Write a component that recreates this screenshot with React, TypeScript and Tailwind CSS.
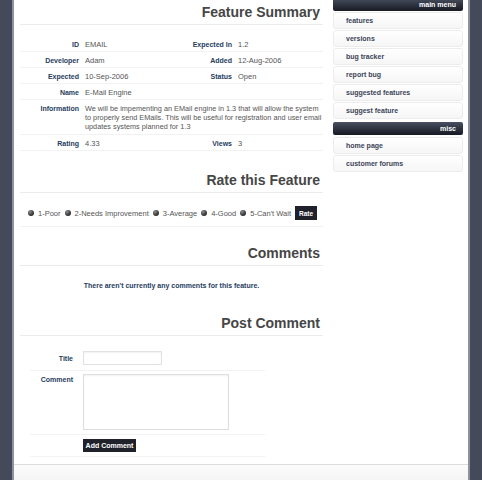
import React from "react";

const font = "font-['Liberation_Sans',Arial,Helvetica,sans-serif]";

function Heading({ children }: { children: React.ReactNode }) {
  return (
    <div className="border-b border-[#ececec] pb-[3px] pr-[3px] text-right text-[14px] font-bold leading-[18px] text-[#464646]">
      {children}
    </div>
  );
}

function Row({ children, tall }: { children: React.ReactNode; tall?: boolean }) {
  return (
    <div
      className={
        "grid grid-cols-[65px_100px_53px_1fr] border-b border-[#f2f2f2] " +
        (tall ? "pb-[3px] pt-[4px]" : "pb-[2.5px] pt-[3.5px]")
      }
    >
      {children}
    </div>
  );
}

function Label({ children }: { children: React.ReactNode }) {
  return <div className="pr-[6px] text-right text-[7px] font-bold text-[#1f3d5e]">{children}</div>;
}

function Value({ children }: { children: React.ReactNode }) {
  return <div className="text-[7.5px] text-[#555555]">{children}</div>;
}

function Radio({ label }: { label: string }) {
  return (
    <span className="flex items-center gap-[4px]">
      <span className="h-[6px] w-[6px] rounded-full bg-[radial-gradient(circle_at_35%_30%,#8a8a8a,#2a2a2a_70%)]" />
      <span className="text-[7.5px] text-[#555555]">{label}</span>
    </span>
  );
}

function MenuBar({ title }: { title: string }) {
  return (
    <div className="h-[13px] rounded-[2px] bg-gradient-to-b from-[#4b5162] to-[#171a23] pr-[7px] text-right text-[7px] font-bold leading-[13px] text-white">
      {title}
    </div>
  );
}

function MenuItem({ label }: { label: string }) {
  return (
    <div className="h-[17px] rounded-[3px] border border-[#ececec] bg-gradient-to-b from-white to-[#f6f6f6] pl-[12px] text-[7px] font-bold leading-[15px] text-[#3b4457]">
      {label}
    </div>
  );
}

export default function App() {
  const mainMenu = ["features", "versions", "bug tracker", "report bug", "suggested features", "suggest feature"];
  const misc = ["home page", "customer forums"];

  return (
    <div className={"h-[480px] w-[482px] overflow-hidden bg-[#444a5a] px-[12px] " + font}>
      <div className="flex h-full flex-col border-x-2 border-[#8d929e] bg-white">
        <div className="flex flex-1">
          {/* main column */}
          <div className="ml-[6px] w-[303px] pt-[3px] text-[7px] leading-[9px]">
            <Heading>Feature Summary</Heading>

            <div className="mt-[11px]">
              <Row>
                <Label>ID</Label>
                <Value>EMAIL</Value>
                <Label>Expected In</Label>
                <Value>1.2</Value>
              </Row>
              <Row>
                <Label>Developer</Label>
                <Value>Adam</Value>
                <Label>Added</Label>
                <Value>12-Aug-2006</Value>
              </Row>
              <Row>
                <Label>Expected</Label>
                <Value>10-Sep-2006</Value>
                <Label>Status</Label>
                <Value>Open</Value>
              </Row>
              <Row>
                <Label>Name</Label>
                <Value>E-Mail Engine</Value>
              </Row>
              <Row tall>
                <Label>Information</Label>
                <div className="col-span-3 whitespace-nowrap text-[7.3px] text-[#555555]">
                  We will be impementing an EMail engine in 1.3 that will allow the system
                  <br />
                  to properly send EMails. This will be useful for registration and user email
                  <br />
                  updates systems planned for 1.3
                </div>
              </Row>
              <Row>
                <Label>Rating</Label>
                <Value>4.33</Value>
                <Label>Views</Label>
                <Value>3</Value>
              </Row>
            </div>

            <div className="mt-[20px]">
              <Heading>Rate this Feature</Heading>
            </div>
            <div className="flex items-center gap-[4px] border-b border-[#f2f2f2] pb-[6px] pl-[8px] pt-[13px]">
              <Radio label="1-Poor" />
              <Radio label="2-Needs Improvement" />
              <Radio label="3-Average" />
              <Radio label="4-Good" />
              <Radio label="5-Can't Wait" />
              <button className="h-[14px] bg-[#1f222b] px-[4px] text-[6.5px] font-bold text-white">Rate</button>
            </div>

            <div className="mt-[17px]">
              <Heading>Comments</Heading>
            </div>
            <div className="pt-[15px] text-center font-bold text-[#1f3d5e]">
              There aren't currently any comments for this feature.
            </div>

            <div className="mt-[24px]">
              <Heading>Post Comment</Heading>
            </div>
            <div className="ml-[10px] w-[235px] pt-[15px]">
              <div className="flex items-center border-b border-[#f3f3f3] pb-[5px]">
                <div className="w-[45px] pr-[2px] text-right font-bold text-[#1f3d5e]">Title</div>
                <input className="ml-[8px] h-[14px] w-[79px] border border-[#e2e2e2] shadow-[inset_0_1px_2px_rgba(0,0,0,0.06)] outline-none" />
              </div>
              <div className="flex items-start border-b border-[#f3f3f3] pb-[4px] pt-[3px]">
                <div className="w-[45px] pr-[2px] pt-[1px] text-right font-bold text-[#1f3d5e]">Comment</div>
                <textarea className="ml-[8px] h-[56px] w-[146px] resize-none border border-[#dedede] shadow-[inset_0_1px_2px_rgba(0,0,0,0.06)] outline-none" />
              </div>
              <div className="flex border-b border-[#f3f3f3] pb-[4px] pt-[4px]">
                <div className="w-[45px]" />
                <button className="ml-[8px] h-[13px] w-[53px] bg-[#1f222b] text-[7px] font-bold leading-[13px] text-white">
                  Add Comment
                </button>
              </div>
            </div>
          </div>

          {/* sidebar */}
          <div className="ml-[10px] mt-[-2px] flex w-[130px] flex-col">
            <MenuBar title="main menu" />
            <div className="mt-[1px] flex flex-col gap-[1px]">
              {mainMenu.map((m) => (
                <MenuItem key={m} label={m} />
              ))}
            </div>
            <div className="mt-[3px]">
              <MenuBar title="misc" />
            </div>
            <div className="mt-[2px] flex flex-col gap-[1px]">
              {misc.map((m) => (
                <MenuItem key={m} label={m} />
              ))}
            </div>
          </div>
        </div>

        <div className="h-[16px] border-t border-[#dcdcdc] bg-gradient-to-b from-[#fbfbfb] to-[#f5f5f5]" />
      </div>
    </div>
  );
}
